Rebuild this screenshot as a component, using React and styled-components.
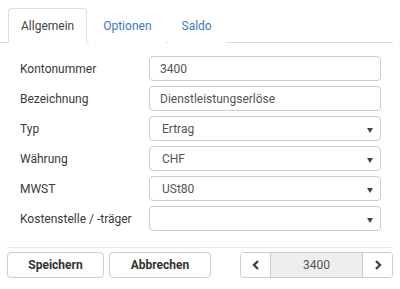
import React from "react";
import styled, { createGlobalStyle } from "styled-components";

const Global = createGlobalStyle`
  html, body { margin: 0; padding: 0; background: #fff; }
  body { font-family: Roboto, "Liberation Sans", Arial, sans-serif; font-size: 12px; color: #333; }
  * { box-sizing: border-box; }
`;

const Page = styled.div`
  width: 400px;
  height: 289px;
  padding: 8px 7px 0 0;
`;

const TabBar = styled.div`
  display: flex;
  align-items: flex-end;
  padding-left: 8px;
  border-bottom: 1px solid #ddd;
  height: 35px;
`;

const Tab = styled.div`
  height: 35px;
  margin-bottom: -1px;
  padding: 0 ${(p) => (p.$active ? 12 : 13)}px;
  margin-right: 2px;
  display: flex;
  align-items: center;
  border: 1px solid ${(p) => (p.$active ? "#ddd" : "transparent")};
  border-bottom-color: ${(p) => (p.$active ? "#fff" : "transparent")};
  border-radius: 4px 4px 0 0;
  background: #fff;
  color: ${(p) => (p.$active ? "#444" : "#3a7bc0")};
  font-size: 12px;
`;

const Form = styled.div`
  display: grid;
  grid-template-columns: 129px 232px;
  row-gap: 5px;
  padding: 13px 0 0 20px;
`;

const Label = styled.div`
  height: 25px;
  display: flex;
  align-items: center;
  color: #3a3a3a;
`;

const Field = styled.div`
  position: relative;
  height: 25px;
  border: 1px solid #ccc;
  border-radius: 4px;
  background: #fff;
  display: flex;
  align-items: center;
  padding-left: ${(p) => (p.$select ? 12 : 10)}px;
  color: #555;
`;

const Caret = styled.span`
  position: absolute;
  right: 7px;
  top: 11px;
  width: 0;
  height: 0;
  border-left: 3px solid transparent;
  border-right: 3px solid transparent;
  border-top: 5px solid #444;
`;

const Footer = styled.div`
  margin: 16px 0 0 7px;
  border-top: 1px solid #e8e8e8;
  padding-top: 4px;
  display: flex;
  align-items: center;
`;

const Button = styled.div`
  height: 26px;
  width: ${(p) => p.$w}px;
  margin-right: ${(p) => p.$mr || 0}px;
  border: 1px solid #ccc;
  border-radius: 4px;
  display: flex;
  align-items: center;
  justify-content: center;
  font-weight: bold;
  color: #333;
  background: #fff;
`;

const Pager = styled.div`
  margin-left: auto;
  display: flex;
  height: 26px;
  border: 1px solid #ccc;
  border-radius: 4px;
  overflow: hidden;
`;

const PagerBtn = styled.div`
  width: 29px;
  display: flex;
  align-items: center;
  justify-content: center;
  background: #fff;
`;

const PagerValue = styled.div`
  width: 93px;
  display: flex;
  align-items: center;
  justify-content: center;
  background: #eee;
  border-left: 1px solid #ccc;
  border-right: 1px solid #ccc;
  color: #555;
`;

const Chevron = ({ dir }) => (
  <svg width="8" height="10" viewBox="0 0 8 10">
    <path
      d={dir === "left" ? "M6 1 L2 5 L6 9" : "M2 1 L6 5 L2 9"}
      fill="none"
      stroke="#444"
      strokeWidth="2.4"
    />
  </svg>
);

const rows = [
  { label: "Kontonummer", value: "3400" },
  { label: "Bezeichnung", value: "Dienstleistungserlöse" },
  { label: "Typ", value: "Ertrag", select: true },
  { label: "Währung", value: "CHF", select: true },
  { label: "MWST", value: "USt80", select: true },
  { label: "Kostenstelle / -träger", value: "", select: true },
];

export default function App() {
  return (
    <Page>
      <Global />
      <TabBar>
        <Tab $active>Allgemein</Tab>
        <Tab>Optionen</Tab>
        <Tab>Saldo</Tab>
      </TabBar>
      <Form>
        {rows.map((r) => (
          <React.Fragment key={r.label}>
            <Label>{r.label}</Label>
            <Field $select={r.select}>
              {r.value}
              {r.select && <Caret />}
            </Field>
          </React.Fragment>
        ))}
      </Form>
      <Footer>
        <Button $w={97} $mr={5}>Speichern</Button>
        <Button $w={102}>Abbrechen</Button>
        <Pager>
          <PagerBtn><Chevron dir="left" /></PagerBtn>
          <PagerValue>3400</PagerValue>
          <PagerBtn><Chevron dir="right" /></PagerBtn>
        </Pager>
      </Footer>
    </Page>
  );
}
